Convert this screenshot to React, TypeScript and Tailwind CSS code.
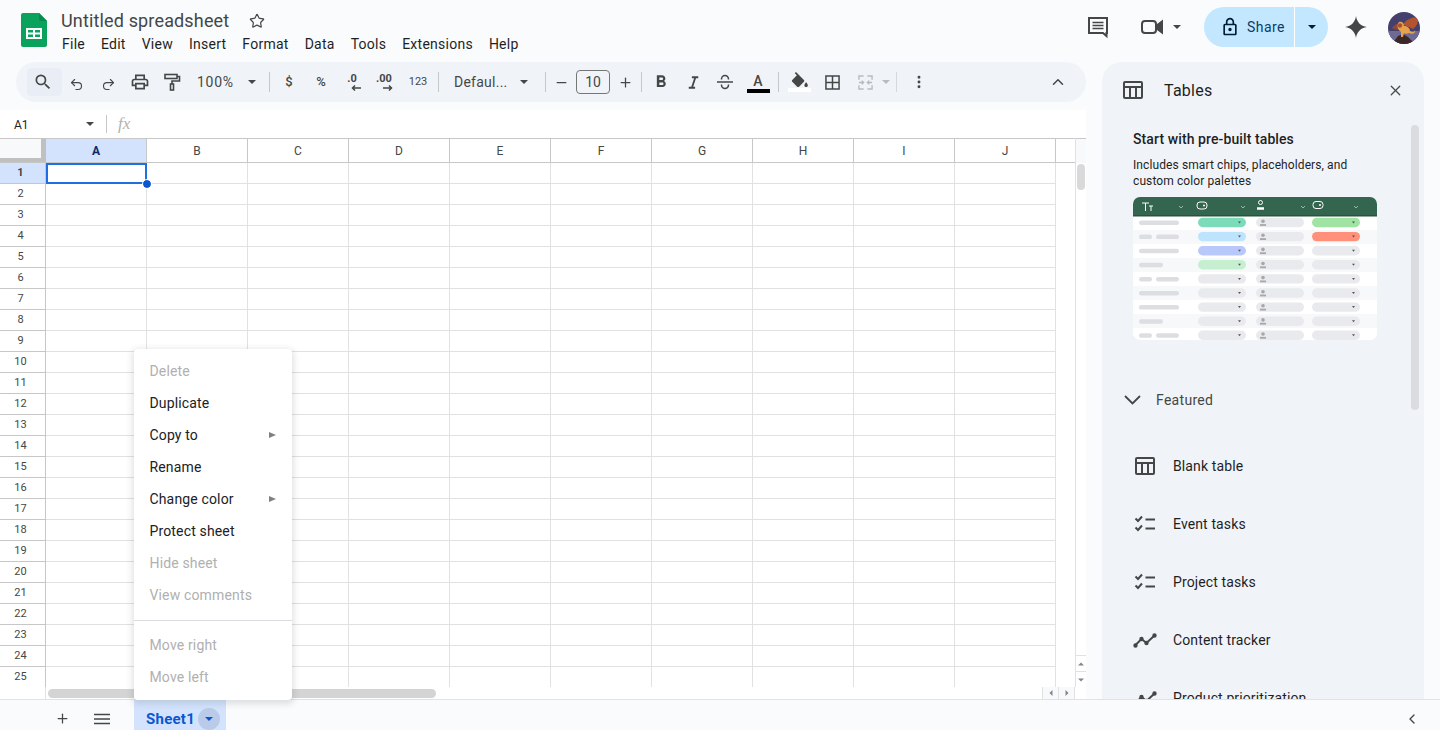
import type { ReactNode } from "react";
import { ChevronLeft, ChevronUp, EllipsisVertical, Minus, Plus, Redo2, Star, Undo2, X } from "lucide-react";

const menus = ["File", "Edit", "View", "Insert", "Format", "Data", "Tools", "Extensions", "Help"];
const columns = ["A", "B", "C", "D", "E", "F", "G", "H", "I", "J"];
const rows = Array.from({ length: 25 }, (_, i) => i + 1);

const contextItems = [
  { label: "Delete", disabled: true },
  { label: "Duplicate" },
  { label: "Copy to", sub: true },
  { label: "Rename" },
  { label: "Change color", sub: true },
  { label: "Protect sheet" },
  { label: "Hide sheet", disabled: true },
  { label: "View comments", disabled: true },
];

function Caret({ className = "border-t-[#444746]" }: { className?: string }) {
  return <span className={`block h-0 w-0 border-x-[4px] border-t-[4px] border-x-transparent ${className}`} />;
}

function Btn({ children, className = "" }: { children: ReactNode; className?: string }) {
  return <div className={`flex h-7 w-8 shrink-0 items-center justify-center text-[#444746] ${className}`}>{children}</div>;
}

function Sep({ className = "" }: { className?: string }) {
  return <div className={`h-5 w-px shrink-0 bg-[#c7c7c7] ${className}`} />;
}

function Glyph({ d, className = "h-[18px] w-[18px]", fill = "#444746" }: { d: string; className?: string; fill?: string }) {
  return (
    <svg viewBox="0 0 24 24" className={className} fill={fill}>
      <path d={d} />
    </svg>
  );
}

function TableIcon({ className = "h-6 w-6" }: { className?: string }) {
  return (
    <svg viewBox="0 0 24 24" className={className} fill="none" stroke="#444746" strokeWidth="2">
      <rect x="3" y="4" width="18" height="16" rx="1" />
      <path d="M3 9h18M9 9v11M15 9v11" />
    </svg>
  );
}

function TasksIcon() {
  return (
    <svg viewBox="0 0 24 24" className="h-6 w-6" fill="none" stroke="#444746" strokeWidth="2">
      <path d="M2.500 6.500 5 9l4-4.500M2.500 15.500 5 18l4-4.500" />
      <path d="M12.500 7.500H22M12.500 16.500H22" />
    </svg>
  );
}

function TrendIcon() {
  return (
    <svg viewBox="0 0 24 24" className="h-6 w-6" fill="none" stroke="#444746" strokeWidth="2">
      <path d="M2 17.500 8.500 11l5 4L22 7" />
      <circle cx="2.500" cy="17.500" r="1.200" fill="#444746" />
      <circle cx="8.500" cy="11" r="1.200" fill="#444746" />
      <circle cx="13.500" cy="15" r="1.200" fill="#444746" />
      <circle cx="21.500" cy="7.500" r="1.200" fill="#444746" />
    </svg>
  );
}

function Logo() {
  return (
    <svg viewBox="0 0 26 34" className="h-[34px] w-[26px] shrink-0">
      <path d="M2 0h16l8 8v24a2 2 0 0 1-2 2H2a2 2 0 0 1-2-2V2a2 2 0 0 1 2-2z" fill="#0ba25e" />
      <path d="M18 0l8 8h-6a2 2 0 0 1-2-2z" fill="#078a4e" />
      <path d="M5 15h16v11H5z" fill="#fff" />
      <path d="M7 17h5v2.500H7zM14 17h5v2.500h-5zM7 21.500h5V24H7zM14 21.500h5V24h-5z" fill="#0ba25e" />
    </svg>
  );
}

function Avatar() {
  return (
    <svg viewBox="0 0 32 32" className="h-8 w-8 shrink-0 rounded-full">
      <rect width="32" height="32" fill="#453f6e" />
      <rect y="19" width="32" height="13" fill="#6d6b93" />
      <path d="M4 32l6-8 5-2 5 3 7 7z" fill="#3b2728" />
      <path d="M15 13c2-5 9-8 15-8 1 4-1 9-5 12-3-2-7-3-10-4z" fill="#b3542f" />
      <path d="M4 16c2-3 5-5 8-4l-1 6c-3 0-5-1-7-2z" fill="#8d4a3a" />
      <path d="M11 10c3-1 5 1 5 4 3 0 6 2 6 5 2 2 5 1 5-1 1 3-3 5-6 3-2 1-4 1-5 0l-1 4h-2l0-5c-3-2-5-7-2-10z" fill="#e6a24c" />
      <circle cx="12" cy="13.500" r="2.200" fill="#a8522a" />
    </svg>
  );
}

function Thumbnail() {
  const ys = [0, 1, 2, 3, 4, 5, 6, 7, 8];
  const first = ["#7cdcba", "#bde3fd", "#b8c8fb", "#c6efd0"];
  const third = ["#a0e3a3", "#ff907a"];
  const bars = [[6, 46], [6, 19, 23, 46], [6, 46], [6, 30], [6, 19, 23, 46], [6, 46], [6, 46], [6, 30], [6, 19, 23, 46]];
  return (
    <svg viewBox="0 0 244 143" className="h-[143px] w-[244px] blur-[0.3px]">
      <rect width="244" height="143" rx="7" fill="#fff" />
      {ys.filter((i) => i % 2 === 1).map((i) => (
        <rect key={i} y={19 + i * 14} width="244" height="14" fill="#f6f8fa" />
      ))}
      <path d="M0 19V7a7 7 0 0 1 7-7h230a7 7 0 0 1 7 7v12z" fill="#33654f" />
      <path d="M0 18h244v1.500H0z" fill="#28543f" />
      <path d="M9 6h7M12.500 6v8M16 9h4M18 9v5" fill="none" stroke="#fff" strokeWidth="1" />
      {[46, 108, 168, 221].map((x) => (
        <path key={x} d="M0 0l2 2 2-2" transform={`translate(${x} 9)`} fill="none" stroke="#b7cbc1" strokeWidth="0.8" />
      ))}
      <rect x="64" y="5" width="10" height="7" rx="3" fill="none" stroke="#fff" />
      <circle cx="71" cy="8.500" r="1" fill="#fff" />
      <rect x="180" y="4.500" width="10" height="7" rx="3" fill="none" stroke="#fff" />
      <circle cx="187" cy="8" r="1" fill="#fff" />
      <circle cx="127.500" cy="5.500" r="2" fill="none" stroke="#fff" />
      <path d="M124 11.500h7" stroke="#fff" strokeWidth="2.500" />
      {ys.map((i) => {
        const cy = 25.500 + i * 14.100;
        return (
          <g key={i}>
            {bars[i].map((x, j) =>
              j % 2 === 0 ? <rect key={j} x={x} y={cy - 2} width={bars[i][j + 1] - x} height="4.500" rx="2.200" fill="#dcdee1" /> : null,
            )}
            <rect x="65" y={cy - 4.700} width="48" height="9.400" rx="4.700" fill={first[i] ?? "#e9eaed"} />
            <rect x="123" y={cy - 4.700} width="48" height="9.400" rx="4.700" fill="#e9eaed" />
            <rect x="179" y={cy - 4.700} width="48" height="9.400" rx="4.700" fill={third[i] ?? "#e9eaed"} />
            <path d={`M105 ${cy - 1}h3l-1.500 2z`} fill="#555" />
            <path d={`M219 ${cy - 1}h3l-1.500 2z`} fill="#555" />
            <circle cx="130" cy={cy - 1.300} r="1.800" fill="#a5a7aa" />
            <path d={`M127 ${cy + 2.500}h6`} stroke="#a5a7aa" strokeWidth="1.800" />
          </g>
        );
      })}
    </svg>
  );
}

function Toolbar() {
  return (
    <div className="flex h-10 items-center rounded-full bg-[#f0f4f9] pl-[11px] pr-3 text-[#444746]">
      <div className="flex h-7 w-[35px] shrink-0 items-center justify-center rounded bg-[#e9eef6] pr-1">
        <Glyph className="h-5 w-5" d="M15.500 14h-.79l-.28-.27A6.471 6.471 0 0 0 16 9.500 6.500 6.500 0 1 0 9.500 16c1.610 0 3.090-.59 4.230-1.570l.27.28v.79l5 4.990L20.490 19l-4.990-5zm-6 0C7.010 14 5 11.990 5 9.500S7.010 5 9.500 5 14 7.010 14 9.500 11.990 14 9.500 14z" />
      </div>
      <Btn className="-ml-[2px] pt-1"><Undo2 size={15} strokeWidth={1.800} /></Btn>
      <Btn className="pt-1"><Redo2 size={15} strokeWidth={1.800} /></Btn>
      <Btn>
        <Glyph className="h-5 w-5" d="M19 8h-1V3H6v5H5c-1.660 0-3 1.340-3 3v6h4v4h12v-4h4v-6c0-1.660-1.340-3-3-3zM8 5h8v3H8V5zm8 14H8v-4h8v4zm2-4v-2H6v2H4v-4c0-.55.45-1 1-1h14c.55 0 1 .45 1 1v4h-2z" />
      </Btn>
      <Btn>
        <svg viewBox="0 0 18 18" className="h-[18px] w-[18px]" fill="none" stroke="#444746" strokeWidth="1.600">
          <rect x="2" y="1.500" width="12" height="4" />
          <path d="M14 3.500h2.500v4.500H9v3" />
          <rect x="7.500" y="11" width="3" height="6" />
        </svg>
      </Btn>
      <div className="ml-[9px] w-[38px] shrink-0 text-sm tracking-[0.7px]">100%</div>
      <Btn className="ml-[7px] !w-5"><Caret /></Btn>
      <Sep className="ml-[7px]" />
      <Btn className="ml-[3px] text-[13px] font-medium">$</Btn>
      <Btn className="text-[13px] font-medium">%</Btn>
      <Btn className="-translate-x-px">
        <div className="flex w-5 flex-col items-center">
          <span className="text-[11px] font-bold leading-[12px]">.0</span>
          <svg viewBox="0 0 10 6" className="ml-2 h-1.5 w-2.5" fill="none" stroke="#444746" strokeWidth="1.500">
            <path d="M10 3H2M4 .5 1.500 3 4 5.500" />
          </svg>
        </div>
      </Btn>
      <Btn className="-translate-x-px">
        <div className="flex w-5 flex-col items-center">
          <span className="text-[11px] font-bold leading-[12px]">.00</span>
          <svg viewBox="0 0 10 6" className="ml-2 h-1.5 w-2.5" fill="none" stroke="#444746" strokeWidth="1.500">
            <path d="M0 3h8M6 .5 8.500 3 6 5.500" />
          </svg>
        </div>
      </Btn>
      <Btn className="ml-px text-[11px]">123</Btn>
      <Sep className="ml-1" />
      <div className="ml-[15px] w-[54px] shrink-0 text-sm tracking-[0.25px]">Defaul...</div>
      <Btn className="ml-1.5 !w-5"><Caret /></Btn>
      <Sep className="ml-[11px]" />
      <Btn className="ml-[3px] !w-6"><Minus size={15} strokeWidth={2} /></Btn>
      <div className="ml-[3px] flex h-6 w-[34px] shrink-0 items-center justify-center rounded border border-[#747775] text-sm">10</div>
      <Btn className="ml-[3px] !w-6"><Plus size={15} strokeWidth={2} /></Btn>
      <Sep className="ml-1" />
      <Btn className="ml-[3px]">
        <Glyph className="h-5 w-5" d="M15.600 10.790c.97-.67 1.650-1.770 1.650-2.790 0-2.260-1.750-4-4-4H7v14h7.040c2.090 0 3.710-1.700 3.710-3.790 0-1.520-.86-2.820-2.150-3.420zM10 6.500h3c.83 0 1.500.67 1.500 1.500s-.67 1.500-1.500 1.500h-3v-3zm3.500 9H10v-3h3.500c.83 0 1.500.67 1.500 1.500s-.67 1.500-1.500 1.500z" />
      </Btn>
      <Btn>
        <Glyph className="h-[19px] w-[19px]" d="M10 4v2.500h2.800l-3.600 11H6V20h8v-2.500h-2.400l3.600-11H18V4z" />
      </Btn>
      <Btn>
        <svg viewBox="0 0 18 18" className="h-[18px] w-[18px]" fill="none" stroke="#444746" strokeWidth="1.500">
          <path d="M1 9h16M5.500 6.500V6a3.500 3.500 0 0 1 7 0v.5M5.500 11.500v.5a3.500 3.500 0 0 0 7 0v-.5" />
        </svg>
      </Btn>
      <Btn className="ml-px pt-[3px]">
        <div className="flex w-[23px] flex-col items-center">
          <span className="text-[14px] font-medium leading-[15px]">A</span>
          <span className="h-1 w-[23px] bg-black" />
        </div>
      </Btn>
      <Sep className="ml-1" />
      <Btn className="ml-1">
        <div className="flex w-[23px] flex-col items-center">
          <svg viewBox="0 0 22 18" className="h-4 w-5" fill="#444746">
            <path d="M16.560 8.940 7.620 0 6.210 1.410l2.380 2.380-5.150 5.150c-.59.59-.59 1.540 0 2.120l5.500 5.500c.29.29.68.44 1.060.44s.77-.15 1.060-.44l5.500-5.500c.59-.58.59-1.530 0-2.120zM19 11.500s-2 2.170-2 3.500c0 1.100.9 2 2 2s2-.9 2-2c0-1.330-2-3.500-2-3.500z" />
          </svg>
          <span className="h-1 w-[23px] bg-white" />
        </div>
      </Btn>
      <Btn className="ml-px">
        <svg viewBox="0 0 16 16" className="h-[15px] w-[15px]" fill="none" stroke="#444746" strokeWidth="1.600">
          <path d="M1 1h14v14H1zM8 1v14M1 8h14" />
        </svg>
      </Btn>
      <Btn className="ml-0.5 !w-[30px]">
        <svg viewBox="0 0 16 16" className="h-[15px] w-[15px]" fill="none" stroke="#b8bbbe" strokeWidth="1.500">
          <path d="M1 5V1h5M10 1h5v4M15 11v4h-5M6 15H1v-4M1 8h4M4 6l2 2-2 2M15 8h-4M12 6l-2 2 2 2" />
        </svg>
      </Btn>
      <Btn className="!w-3"><Caret className="border-t-[#b8bbbe]" /></Btn>
      <Sep className="ml-1 bg-[#d5d7da]" />
      <Btn className="ml-1.5"><EllipsisVertical size={16} strokeWidth={2.400} /></Btn>
      <div className="flex-1" />
      <Btn><ChevronUp size={18} strokeWidth={2} /></Btn>
    </div>
  );
}

function Grid() {
  return (
    <div className="flex min-h-0 flex-1 flex-col bg-white">
      <div className="flex min-h-0 flex-1">
        <div className="w-[1075px] shrink-0 overflow-hidden">
          <div className="flex h-[25px] border-y border-[#c7c7c7] text-xs text-[#444746]">
            <div className="w-[46px] shrink-0 border-b-[4px] border-r-[5px] border-[#c0c0c0] bg-[#f8f9fa]" />
            {columns.map((c) => (
              <div
                key={c}
                className={`flex w-[101px] shrink-0 items-center justify-center border-r border-[#c7c7c7] pt-px ${c === "A" ? "bg-[#d3e3fd] font-bold text-[#0b2c6b]" : ""}`}
              >
                {c}
              </div>
            ))}
          </div>
          {rows.map((r) => (
            <div key={r} className="flex h-[21px]">
              <div
                className={`flex w-[46px] shrink-0 items-center justify-center border-b border-r border-[#c7c7c7] pr-1 text-[11px] text-[#444746] ${r === 1 ? "bg-[#d3e3fd] font-bold text-[#0b2c6b]" : ""}`}
              >
                {r}
              </div>
              {columns.map((c) => (
                <div key={c} className="relative w-[101px] shrink-0 border-b border-r border-[#e1e1e1]">
                  {r === 1 && c === "A" && (
                    <div className="absolute -bottom-px -right-px left-0 top-0 border-2 border-[#1f6fe0]">
                      <span className="absolute -bottom-[6px] -right-[6px] z-10 h-2 w-2 rounded-full bg-[#0b57d0] outline outline-1 outline-white" />
                    </div>
                  )}
                </div>
              ))}
            </div>
          ))}
        </div>
        <div className="flex w-[11px] shrink-0 flex-col border-l border-[#e1e1e1] bg-white">
          <div className="h-[25px] shrink-0 border-t border-[#c7c7c7] bg-[#f8f9fa]" />
          <div className="mx-px mt-px h-[26px] rounded-[4px] bg-[#d9d9d9]" />
          <div className="flex-1" />
          <div className="flex h-4 items-center justify-center border-t border-[#e1e1e1]"><Caret className="rotate-180 scale-75 border-t-[#80868b]" /></div>
          <div className="flex h-4 items-center justify-center border-t border-[#e1e1e1]"><Caret className="scale-75 border-t-[#80868b]" /></div>
        </div>
      </div>
      <div className="flex h-3 shrink-0 items-center">
        <div className="h-full w-[46px] shrink-0 border-r border-[#e1e1e1]" />
        <div className="ml-0.5 h-[9px] w-[388px] rounded-full bg-[#d4d4d4]" />
        <div className="flex-1" />
        <div className="flex h-full w-[16px] items-center justify-center border-l border-[#e1e1e1] bg-[#f8f9fa]">
          <Caret className="rotate-90 scale-75 border-t-[#80868b]" />
        </div>
        <div className="flex h-full w-[16px] items-center justify-center border-l border-[#e1e1e1] bg-[#f8f9fa]">
          <Caret className="-rotate-90 scale-75 border-t-[#80868b]" />
        </div>
        <div className="h-full w-[12px] border-l border-[#e1e1e1]" />
      </div>
    </div>
  );
}

function Panel() {
  return (
    <aside className="relative ml-4 flex w-[322px] shrink-0 flex-col overflow-hidden rounded-t-[20px] bg-[#f0f4f9]">
      <div className="flex h-14 shrink-0 items-center pl-[19px] pr-[20px]">
        <TableIcon />
        <span className="ml-[19px] flex-1 pt-0.5 text-base tracking-[0.25px] text-[#1f1f1f]">Tables</span>
        <X size={17} strokeWidth={1.800} className="text-[#444746]" />
      </div>
      <div className="absolute left-[309px] top-[63px] h-[285px] w-2 rounded-full bg-[#dadce0]" />
      <div className="pl-[31px] pt-[11px]">
        <div className="text-sm font-medium leading-5 tracking-[0.1px] text-[#1f1f1f]">Start with pre-built tables</div>
        <p className="mt-2 w-[230px] text-xs leading-4 tracking-[0.1px] text-[#1f1f1f]">Includes smart chips, placeholders, and custom color palettes</p>
        <div className="mt-2"><Thumbnail /></div>
      </div>
      <div className="mt-[50px] flex h-6 items-center pl-[22px]">
        <svg viewBox="0 0 17 10" className="h-2.5 w-[17px]" fill="none" stroke="#444746" strokeWidth="1.800">
          <path d="M1 1l7.500 7.500L16 1" />
        </svg>
        <span className="ml-[15px] text-sm tracking-[0.3px] text-[#444746]">Featured</span>
      </div>
      <div className="mt-[27px] flex flex-col pl-[31px]">
        {[
          { label: "Blank table", icon: <TableIcon /> },
          { label: "Event tasks", icon: <TasksIcon /> },
          { label: "Project tasks", icon: <TasksIcon /> },
          { label: "Content tracker", icon: <TrendIcon /> },
          { label: "Product prioritization", icon: <TrendIcon /> },
        ].map((item) => (
          <div key={item.label} className="flex h-[58px] shrink-0 items-center">
            {item.icon}
            <span className="ml-4 text-sm tracking-[0.12px] text-[#1f1f1f]">{item.label}</span>
          </div>
        ))}
      </div>
    </aside>
  );
}

function ContextMenu() {
  const disabled = "text-[#b0b0b0]";
  const row = "flex h-8 items-center justify-between pl-[15.5px] pr-4 text-sm tracking-[0.15px]";
  return (
    <div className="absolute left-[134px] top-[349px] z-20 w-[158px] rounded bg-white pb-[7px] pt-1.5 text-[#202124] shadow-[0_2px_6px_2px_rgba(60,64,67,0.15)]">
      {contextItems.map((item) => (
        <div key={item.label} className={`${row} ${item.disabled ? disabled : ""}`}>
          {item.label}
          {item.sub && <span className="block h-0 w-0 border-y-[3.500px] border-l-[7px] border-y-transparent border-l-[#808080]" />}
        </div>
      ))}
      <div className="mb-2 mt-[9px] h-px bg-[#dadce0]" />
      <div className={`${row} ${disabled}`}>Move right</div>
      <div className={`${row} ${disabled}`}>Move left</div>
    </div>
  );
}

export default function App() {
  return (
    <div className="relative flex h-[730px] w-[1440px] flex-col overflow-hidden bg-[#f9fbfd] font-[Roboto,sans-serif]">
      <header className="flex h-[62px] shrink-0 items-center pl-[21px] pr-5">
        <div className="-mt-[2px]"><Logo /></div>
        <div className="ml-[14px] flex flex-col">
          <div className="flex items-center">
            <span className="text-lg leading-6 tracking-[0.15px] text-[#444746]">Untitled spreadsheet</span>
            <Star size={16} strokeWidth={1.800} className="ml-[20px] text-[#444746]" />
          </div>
          <nav className="ml-px mt-px flex gap-[16px] text-sm leading-5 tracking-[0.25px] text-[#1f1f1f]">
            {menus.map((m) => (
              <span key={m}>{m}</span>
            ))}
          </nav>
        </div>
        <div className="flex-1" />
        <div className="-mt-2 flex items-center">
          <svg viewBox="0 0 24 24" className="h-6 w-6" fill="none" stroke="#444746" strokeWidth="2">
            <path d="M3 3h18v15h-.5v3L17 18H3z" />
            <path d="M6.500 7.500h11M6.500 10.500h11M6.500 13.500h11" strokeWidth="1.600" />
          </svg>
          <svg viewBox="0 0 24 24" className="ml-[30px] h-6 w-6" fill="none" stroke="#444746" strokeWidth="2">
            <rect x="2" y="6" width="14" height="12" rx="3" />
            <path d="M16 11l6-4.500v11L16 13z" fill="#444746" />
          </svg>
          <span className="ml-[9px]"><Caret /></span>
          <div className="ml-[23px] flex h-10 w-[124px] overflow-hidden rounded-full bg-[#c2e7ff] text-[#001d35]">
            <div className="flex w-[91px] items-center border-r-[1.500px] border-white pl-4">
              <svg viewBox="0 0 24 24" className="h-5 w-5" fill="#001d35">
                <path d="M18 8h-1V6c0-2.760-2.240-5-5-5S7 3.240 7 6v2H6c-1.100 0-2 .9-2 2v10c0 1.100.9 2 2 2h12c1.100 0 2-.9 2-2V10c0-1.100-.9-2-2-2zM9 6c0-1.660 1.340-3 3-3s3 1.340 3 3v2H9V6zm9 14H6V10h12v10zm-6-3c1.100 0 2-.9 2-2s-.9-2-2-2-2 .9-2 2 .9 2 2 2z" />
              </svg>
              <span className="ml-[7px] text-sm tracking-[0.45px] text-[#0b3d66]">Share</span>
            </div>
            <div className="flex flex-1 items-center justify-center"><Caret className="border-t-[#001d35]" /></div>
          </div>
          <svg viewBox="0 0 24 24" className="ml-4 h-6 w-6" fill="#444746">
            <path d="M12 1c.8 6 4.500 10 11 11-6.500 1-10.200 5-11 11-.8-6-4.500-10-11-11C7.500 11 11.200 7 12 1z" />
          </svg>
          <div className="ml-5 mt-0.5"><Avatar /></div>
        </div>
      </header>

      <main className="flex min-h-0 flex-1">
        <div className="flex w-[1086px] shrink-0 flex-col">
          <div className="pl-4"><Toolbar /></div>
          <div className="mt-2 flex h-7 shrink-0 items-center bg-white pl-[14px] text-[#444746]">
            <span className="w-[72px] pt-px text-xs text-[#1f1f1f]">A1</span>
            <Caret />
            <div className="ml-3 h-[18px] w-px bg-[#c7c7c7]" />
            <span className="ml-[11px] text-[17px] italic text-[#b0b3b6] [font-family:'Liberation_Serif',serif]">fx</span>
          </div>
          <Grid />
        </div>
        <Panel />
      </main>

      <footer className="flex h-[31px] shrink-0 items-center border-t border-[#e1e3e1] text-[#444746]">
        <Plus size={15} strokeWidth={2} className="ml-[55px] mt-[7px]" />
        <svg viewBox="0 0 16 12" className="ml-[24px] mt-[7px] h-3 w-4" fill="none" stroke="#444746" strokeWidth="1.600">
          <path d="M0 1.500h16M0 6h16M0 10.500h16" />
        </svg>
        <div className="ml-6 flex h-full w-[92px] items-center bg-[#d3e3fd] pl-3 pt-2">
          <span className="text-[15px] font-bold tracking-[0.25px] text-[#0b57d0]">Sheet1</span>
          <span className="ml-[3px] flex h-[22px] w-[22px] items-center justify-center rounded-full bg-[#b9cbe8]"><Caret className="border-t-[#0b57d0]" /></span>
        </div>
        <div className="flex-1" />
        <ChevronLeft size={16} strokeWidth={2} className="mr-5 mt-2" />
      </footer>

      <ContextMenu />
    </div>
  );
}
